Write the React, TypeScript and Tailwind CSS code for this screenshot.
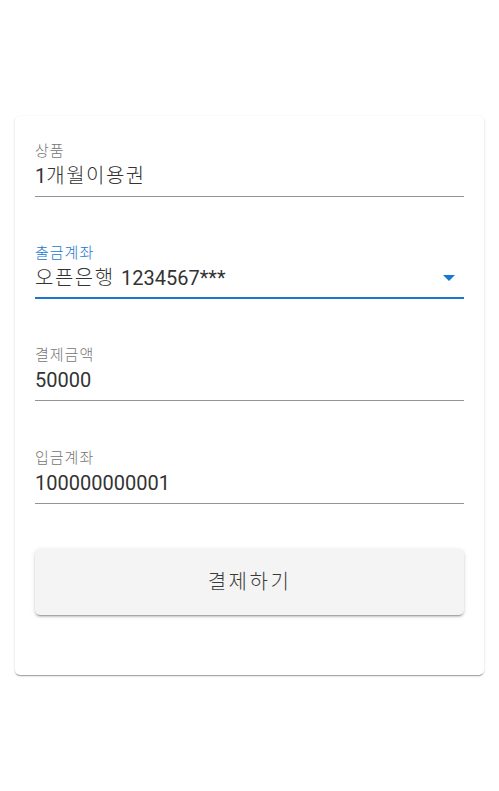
import React from "react";

const font = { fontFamily: "Roboto, 'Noto Sans CJK KR', sans-serif" };

function Ko({ children, big = false }: { children: React.ReactNode; big?: boolean }) {
  return (
    <span className={big ? "font-light tracking-[1.5px]" : "font-light tracking-[1px]"}>
      {children}
    </span>
  );
}

function Field({
  label,
  value,
  focused = false,
  select = false,
  gapTop,
}: {
  label: React.ReactNode;
  value: React.ReactNode;
  focused?: boolean;
  select?: boolean;
  gapTop: string;
}) {
  return (
    <div className={gapTop}>
      <div
        className={`h-[20px] text-[15px] leading-[20px] ${
          focused ? "text-[#1976d2]" : "text-[#757575]"
        }`}
      >
        {label}
      </div>
      <div className="relative pb-[6px]">
        <div className="h-[30px] text-[20px] leading-[30px] text-[#333333]">{value}</div>
        {select && (
          <svg
            className="absolute right-[9px] top-[12px]"
            width="12"
            height="6"
            viewBox="0 0 12 6"
          >
            <path d="M0 0l6 6 6-6z" fill={focused ? "#1976d2" : "#757575"} />
          </svg>
        )}
        <div className="absolute bottom-0 left-0 right-0 h-[1px] bg-[#949494]" />
        {focused && <div className="absolute bottom-0 left-0 right-0 h-[2px] bg-[#1976d2]" />}
      </div>
    </div>
  );
}

export default function App() {
  return (
    <div className="min-h-[791px] w-[499px] bg-white pt-[116px]" style={font}>
      <div className="mx-[15px] rounded-[5px] bg-white px-[20px] pt-[25px] pb-[60px] shadow-[0_2px_1px_-1px_rgba(0,0,0,0.2),0_1px_1px_0_rgba(0,0,0,0.14),0_1px_3px_0_rgba(0,0,0,0.12)]">
        <Field label={<Ko>상품</Ko>} value={<>1<Ko big>개월이용권</Ko></>} gapTop="" />
        <Field
          label={<Ko>출금계좌</Ko>}
          value={<><Ko big>오픈은행 </Ko>1234567***</>}
          focused
          select
          gapTop="mt-[46px]"
        />
        <Field label={<Ko>결제금액</Ko>} value="50000" gapTop="mt-[46px]" />
        <Field label={<Ko>입금계좌</Ko>} value="100000000001" gapTop="mt-[47px]" />
        <button className="mt-[45px] flex h-[66px] w-full items-center justify-center rounded-[5px] bg-[#f4f4f4] text-[20px] font-light tracking-[2.5px] text-[#3a3a3a] shadow-[0_3px_1px_-2px_rgba(0,0,0,0.2),0_2px_2px_0_rgba(0,0,0,0.14),0_1px_5px_0_rgba(0,0,0,0.12)]">
          결제하기
        </button>
      </div>
    </div>
  );
}
